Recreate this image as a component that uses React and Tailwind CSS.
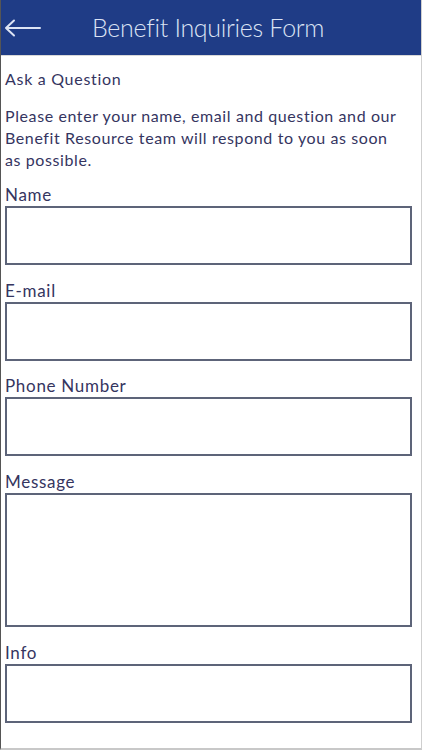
import React from 'react';

const Field = ({ label, tall, className }) => (
  <div className={className}>
    <div className="text-[17px] leading-[20px] tracking-[0.7px] text-[#35355f]">{label}</div>
    <div
      className={`mt-[1px] w-[407px] border-2 border-[#5d6479] bg-white ${tall ? 'h-[134px]' : 'h-[59px]'}`}
    />
  </div>
);

const App = () => {
  return (
    <div className="h-[750px] w-[422px] overflow-hidden border-b-2 border-l border-r border-b-[#c8c8c8] border-l-[#555] border-r-[#cfcfcf] bg-white font-['Lato',sans-serif]">
      <header className="flex h-[56px] items-center bg-[#1f3c86] border-b border-[#d8d8d8]">
        <svg width="40" height="20" viewBox="0 0 40 20" className="ml-[2px]">
          <path d="M37 10H3M3 10L11 2.5M3 10L11 17.5" stroke="#dde4f4" strokeWidth="2" fill="none" strokeLinecap="round" />
        </svg>
        <h1 className="ml-[49px] text-[25px] font-light tracking-[-0.3px] text-[#dbe3f4]">Benefit Inquiries Form</h1>
      </header>

      <main className="pl-[4px]">
        <p className="mt-[13px] text-[16px] leading-[20px] tracking-[0.7px] text-[#35355f]">Ask a Question</p>
        <p className="mt-[16px] pr-[20px] text-[16px] leading-[22px] tracking-[0.6px] text-[#35355f]">
          Please enter your name, email and question and our Benefit Resource team will respond to you as soon as possible.
        </p>

        <Field label="Name" className="mt-[14px]" />
        <Field label="E-mail" className="mt-[16px]" />
        <Field label="Phone Number" className="mt-[15px]" />
        <Field label="Message" tall className="mt-[16px]" />
        <Field label="Info" className="mt-[16px]" />
      </main>
    </div>
  );
};

export default App;
